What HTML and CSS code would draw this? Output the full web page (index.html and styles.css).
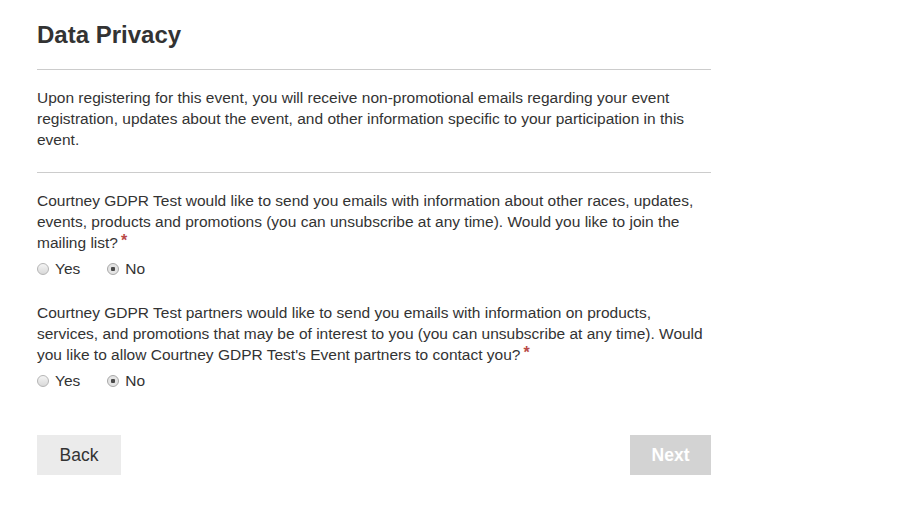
FILE: index.html
```html
<!DOCTYPE html>
<html lang="en">

<head>
    <meta charset="UTF-8">
    <meta name="viewport" content="width=device-width, initial-scale=1.0">
    <title>Data Privacy</title>
    <link rel="stylesheet" href="styles.css">
</head>

<body>
    <div class="data-privacy">
        <h2 class="tieu-de">Data Privacy</h2>
        <hr>
        <p class="mo-ta">Upon registering for this event, you will receive non-promotional emails regarding your event registration, updates about the event, and other information specific to your participation in this event.</p>
        <hr>
        <div class="cau-hoi">
            <p class="bat-buoc">Courtney GDPR Test would like to send you emails with information about other races, updates, events, products and promotions (you can unsubscribe at any time). Would you like to join the mailing list?</p>
            <div class="lua-chon">
                <label><input type="radio" name="mailing"> Yes</label>
                <label><input type="radio" name="mailing" checked> No</label>
            </div>
        </div>
        <div class="cau-hoi">
            <p class="bat-buoc">Courtney GDPR Test partners would like to send you emails with information on products, services, and promotions that may be of interest to you (you can unsubscribe at any time). Would you like to allow Courtney GDPR Test's Event partners to contact you?</p>
            <div class="lua-chon">
                <label><input type="radio" name="partners"> Yes</label>
                <label><input type="radio" name="partners" checked> No</label>
            </div>
        </div>
        <div class="nut">
            <button class="btn-back">Back</button>
            <button class="btn-next" disabled>Next</button>
        </div>
    </div>
</body>

</html>
```

FILE: styles.css
```css
* {
    box-sizing: border-box;
}

body {
    margin: 0;
    font-family: "Liberation Sans", Arial, sans-serif;
    color: #333;
    background: #fff;
}

.data-privacy {
    width: 674px;
    margin-left: 37px;
    padding-top: 20px;
}

.tieu-de {
    margin: 0;
    font-size: 24px;
    line-height: 30px;
    font-weight: bold;
    color: #333;
}

hr {
    margin: 19px 0 0;
    border: 0;
    border-top: 1px solid #ccc;
}

p {
    margin: 0;
    font-size: 15.5px;
    line-height: 21px;
}

.mo-ta {
    margin: 17px 0 22px;
}

.cau-hoi {
    margin-top: 17px;
}

.cau-hoi + .cau-hoi {
    margin-top: 23px;
}

.bat-buoc::after {
    content: "*";
    display: inline-block;
    color: #b94a48;
    font-size: 16px;
    font-weight: bold;
    line-height: 18px;
    vertical-align: top;
    margin-left: 3px;
}

.lua-chon {
    display: flex;
    gap: 27px;
    margin-top: 5px;
    font-size: 15.5px;
    line-height: 21px;
}

.lua-chon label {
    display: flex;
    align-items: center;
}

.lua-chon input {
    appearance: none;
    width: 12px;
    height: 12px;
    margin: 0 6px 0 0;
    border: 1px solid #b5b5b5;
    border-radius: 50%;
    background: linear-gradient(#f4f4f4, #d9d9d9);
}

.lua-chon input:checked {
    border-color: #a8a8a8;
    background: radial-gradient(circle, #4a4a4a 0, #4a4a4a 2px, #e4e4e4 2.5px);
}

.nut {
    display: flex;
    justify-content: space-between;
    margin-top: 44px;
}

.nut button {
    height: 40px;
    border: 0;
    font-family: inherit;
    font-size: 17.5px;
    cursor: pointer;
}

.btn-back {
    width: 84px;
    background-color: #ebebeb;
    color: #333;
}

.btn-next {
    width: 81px;
    background-color: #d3d3d3;
    color: #fff;
    font-weight: bold;
}
```
